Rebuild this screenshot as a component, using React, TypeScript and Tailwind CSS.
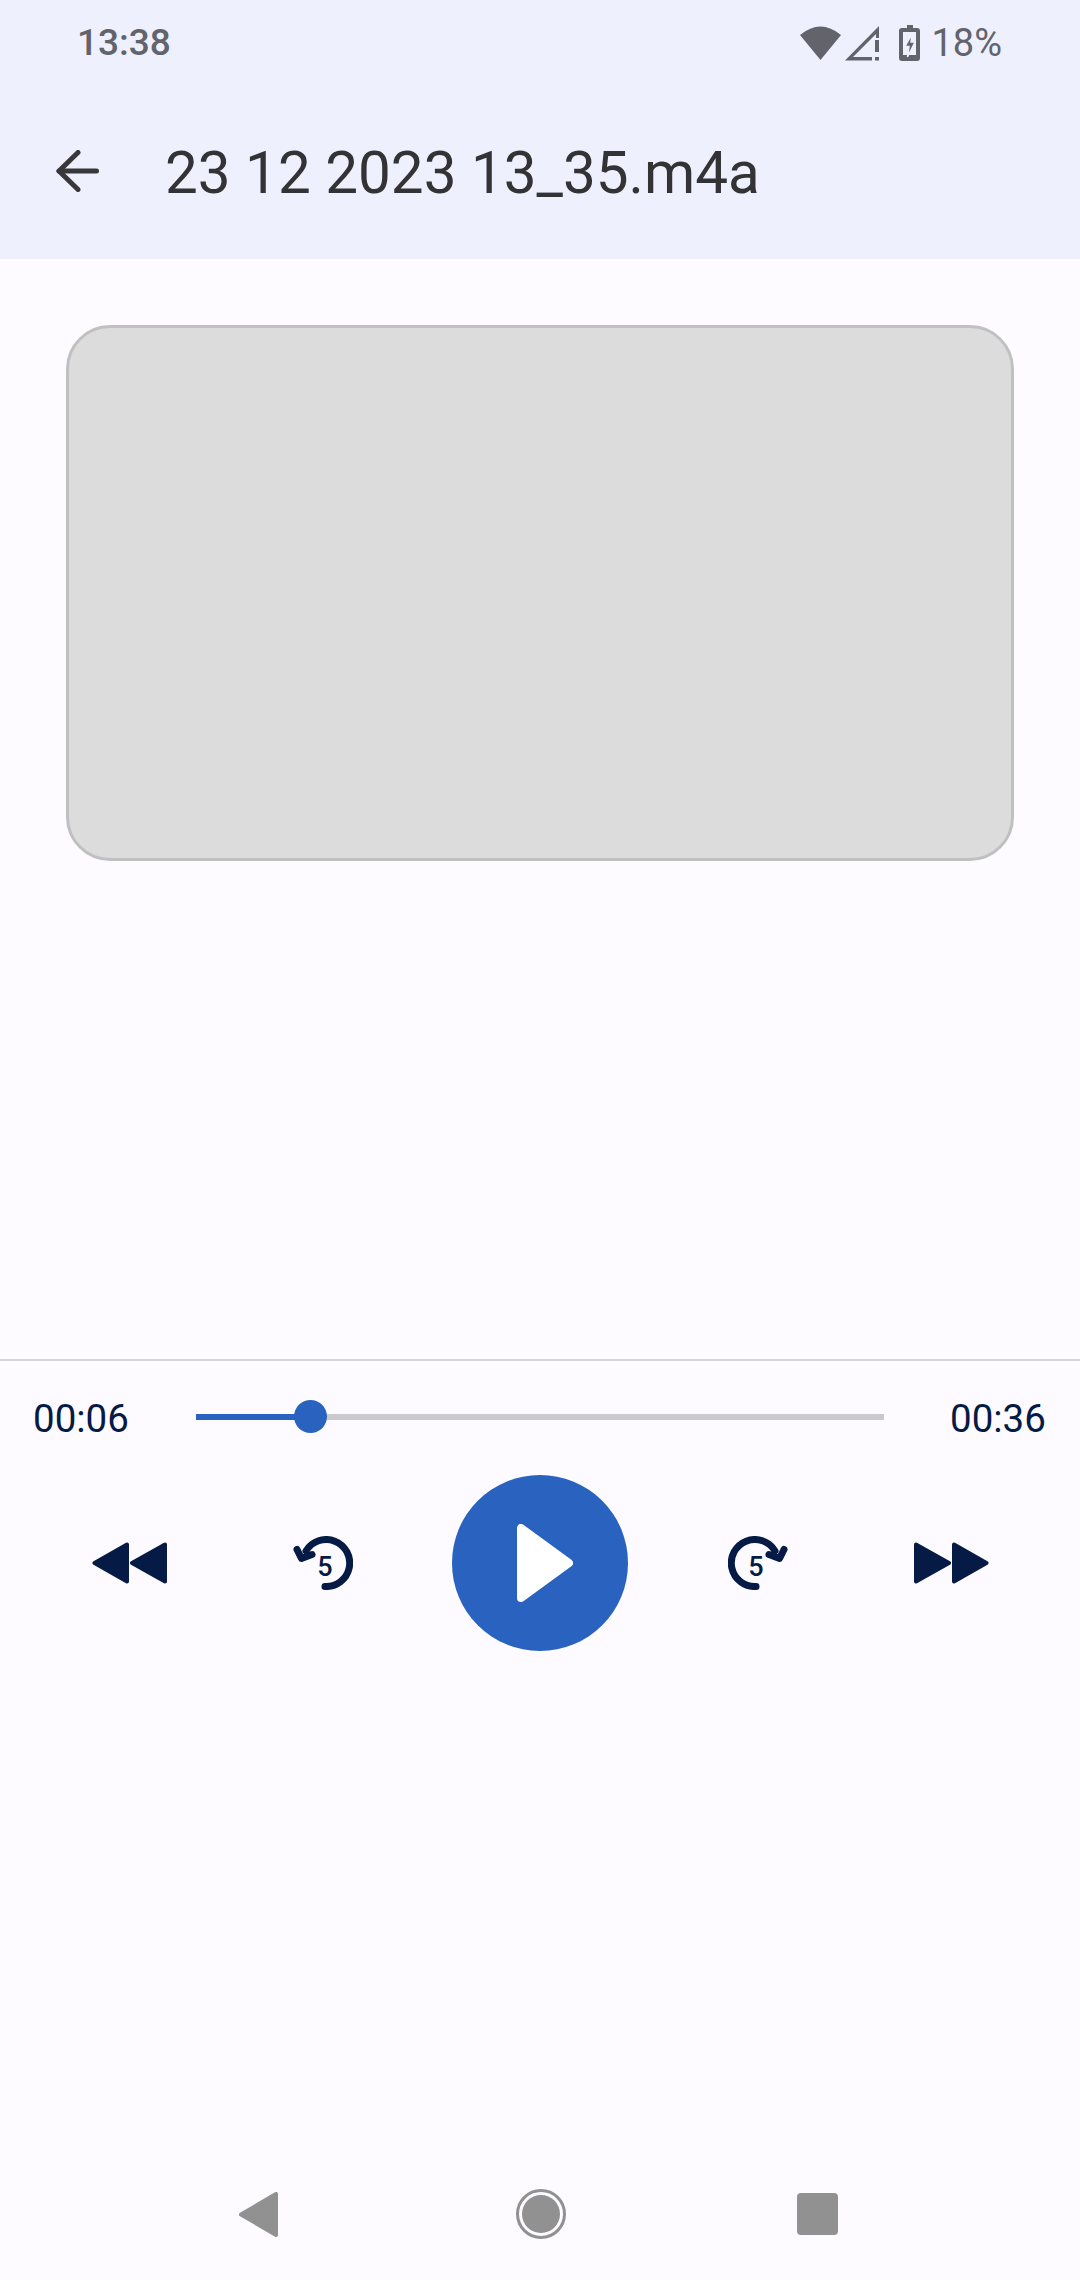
const NAVY = "#051a45";

function Rewind() {
  return (
    <svg width="75" height="42" viewBox="0 0 75 42" fill={NAVY} stroke={NAVY} strokeWidth="4" strokeLinejoin="round">
      <path d="M2.5 21 L35 2.5 V39.5 Z" />
      <path d="M40 21 L73 2.5 V39.5 Z" />
    </svg>
  );
}

function Forward() {
  return (
    <svg width="75" height="42" viewBox="0 0 75 42" fill={NAVY} stroke={NAVY} strokeWidth="4" strokeLinejoin="round">
      <path d="M2 2.5 L35 21 L2 39.5 Z" />
      <path d="M40 2.5 L72.5 21 L40 39.5 Z" />
    </svg>
  );
}

function Skip({ flip }: { flip?: boolean }) {
  return (
    <svg width="60" height="54" viewBox="0 0 60 54">
      <g fill="none" stroke={NAVY} strokeWidth="7" strokeLinecap="round" strokeLinejoin="round" transform={flip ? "translate(60 0) scale(-1 1)" : undefined}>
        <path d="M32 50.5 A23.5 23.5 0 1 0 13 15" />
        <path d="M4 13.5 L8.5 22.5 L19 18.5" />
      </g>
      <text x={flip ? 28 : 32} y="39.5" textAnchor="middle" fill={NAVY} fontFamily="Roboto, sans-serif" fontWeight="500" fontSize="27">5</text>
    </svg>
  );
}

export default function App() {
  return (
    <div className="flex h-[2280px] w-[1080px] flex-col overflow-hidden bg-[#fdfbff] font-['Roboto',sans-serif]">
      <header className="flex h-[259px] shrink-0 flex-col bg-[#eef0fd]">
        <div className="flex h-[86px] items-center justify-between pl-[77px] pr-[78px]">
          <span className="text-[37px] leading-[86px] font-medium text-[#62636b]">13:38</span>
          <div className="flex items-center">
            <svg width="41" height="34" viewBox="0 0 41 34" fill="#62636b">
              <path d="M0 9 Q20.5 -8 41 9 L20.5 34 Z" />
            </svg>
            <svg className="ml-[4px]" width="34" height="35" viewBox="0 0 34 35" fill="#62636b">
              <path fillRule="evenodd" d="M34 0 V12 H31 V8 L8 31 H27 V34.5 H0 Z" />
              <rect x="30" y="14" width="4" height="12" />
              <rect x="30" y="31" width="4" height="3.5" />
            </svg>
            <svg className="ml-[20px]" width="21" height="36" viewBox="0 0 21 36">
              <path d="M8 0 H14 V3 H18 Q21 3 21 6 V33 Q21 36 18 36 H3 Q0 36 0 33 V6 Q0 3 3 3 H8 Z" fill="#62636b" />
              <path d="M4 7 H17 V30 H4 Z" fill="#eef0fd" />
              <path d="M13 9 L6 21.5 H10 L8.5 32 L16 17 H12 Z" fill="#62636b" stroke="#eef0fd" strokeWidth="1.5" />
            </svg>
            <span className="ml-[11px] text-[38px] leading-[86px] text-[#62636b]">18%</span>
          </div>
        </div>
        <div className="mt-[43px] flex h-[88px] items-center pl-[56px]">
          <svg className="mt-[-4px]" width="43" height="42" viewBox="0 0 43 42" fill="none" stroke="#383838" strokeWidth="5" strokeLinecap="round" strokeLinejoin="round">
            <path d="M40.5 21 H3" />
            <path d="M22 2.5 L3 21 L22 39.5" />
          </svg>
          <h1 className="ml-[66px] text-[58.4px] leading-[88px] font-normal text-[#333336]">23 12 2023 13_35.m4a</h1>
        </div>
      </header>

      <main className="flex flex-1 flex-col">
        <div className="mx-[66px] mt-[66px] h-[536px] rounded-[44px] border-[3px] border-[#c0c0c0] bg-[#dcdcdc]" />

        <div className="mt-[498px] h-[2px] bg-[#d8d6da]" />

        <div className="flex h-[114px] items-center">
          <span className="mt-[2px] ml-[33px] w-[163px] text-[38.5px] leading-none text-[#051a45]">00:06</span>
          <div className="relative mb-[2px] h-[6px] w-[688px] bg-[#cbc9ce]">
            <div className="h-full w-[115px] bg-[#2a62bf]" />
            <div className="absolute top-[-14px] left-[98px] h-[33px] w-[33px] rounded-full bg-[#2a62bf]" />
          </div>
          <span className="mt-[2px] ml-[66px] text-[38.5px] leading-none text-[#051a45]">00:36</span>
        </div>

        <div className="flex items-center pl-[92px]">
          <Rewind />
          <div className="ml-[126px]"><Skip /></div>
          <button className="ml-[99px] flex h-[176px] w-[176px] items-center justify-center rounded-full bg-[#2a62bf] pl-[10px]">
            <svg width="56" height="78" viewBox="0 0 56 78" fill="#fff" stroke="#fff" strokeWidth="8" strokeLinejoin="round">
              <path d="M4 4 V74 L52 39 Z" />
            </svg>
          </button>
          <div className="ml-[100px]"><Skip flip /></div>
          <div className="ml-[126px]"><Forward /></div>
        </div>

        <div className="flex-1" />

        <nav className="flex h-[132px] items-center">
          <svg className="ml-[239px]" width="39" height="45" viewBox="0 0 39 45" fill="#919191" stroke="#919191" strokeWidth="4" strokeLinejoin="round">
            <path d="M2 22.5 L37 2 V43 Z" />
          </svg>
          <div className="ml-[238px] h-[50px] w-[50px] rounded-full border-[3px] border-[#919191] p-[3px]">
            <div className="h-full w-full rounded-full bg-[#919191]" />
          </div>
          <div className="ml-[231px] h-[42px] w-[41px] rounded-[4px] bg-[#919191]" />
        </nav>
      </main>
    </div>
  );
}
